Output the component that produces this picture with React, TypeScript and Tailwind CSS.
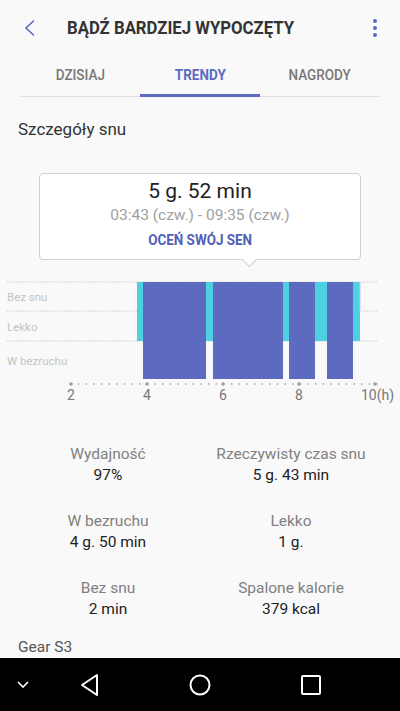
import React from 'react';

const font = { fontFamily: 'Roboto, "Noto Sans", sans-serif' };

const stats = [
  { label: 'Wydajność', value: '97%' },
  { label: 'Rzeczywisty czas snu', value: '5 g. 43 min' },
  { label: 'W bezruchu', value: '4 g. 50 min' },
  { label: 'Lekko', value: '1 g.' },
  { label: 'Bez snu', value: '2 min' },
  { label: 'Spalone kalorie', value: '379 kcal' },
];

// x of hour h on the axis: 2h -> 71, 38px per hour
const hx = (h: number) => 71 + (h - 2) * 38;

function SleepChart() {
  const deep = [
    [143, 206],
    [213, 283],
    [289, 315],
    [327, 353],
  ];
  const axisDots: number[] = [];
  for (let x = 71; x <= 377; x += 7.65) axisDots.push(x);
  return (
    <svg width="400" height="135" viewBox="0 270 400 135" className="block">
      {[281, 310, 340].map(y => (
        <line key={y} x1="7" x2="377" y1={y} y2={y} stroke="#c8c8c8" strokeWidth="1" strokeDasharray="1.5 1.5" />
      ))}
      <text x="7" y="300" fontSize="11.5" fill="#c4c4c4" fontFamily="Roboto">Bez snu</text>
      <text x="7" y="330" fontSize="11.5" fill="#c4c4c4" fontFamily="Roboto">Lekko</text>
      <text x="7" y="364" fontSize="11.5" fill="#c4c4c4" fontFamily="Roboto">W bezruchu</text>
      <rect x="137" y="281" width="223" height="59" fill="#4dd0e1" />
      <rect x="359.5" y="281" width="1" height="29" fill="#c5cae9" />
      {deep.map(([a, b]) => (
        <rect key={a} x={a} y="281" width={b - a} height="97" fill="#5c6bc0" />
      ))}
      {axisDots.map((x, i) => (
        <circle key={i} cx={x} cy="383" r="0.9" fill="#b0b0b0" />
      ))}
      {[2, 4, 6, 8, 10].map(h => (
        <circle key={h} cx={hx(h)} cy="383" r="1.8" fill="#9e9e9e" />
      ))}
      {[2, 4, 6, 8].map(h => (
        <text key={h} x={hx(h)} y="399" fontSize="14" fill="#777" textAnchor="middle" fontFamily="Roboto">{h}</text>
      ))}
      <text x="361" y="399" fontSize="14" fill="#777" fontFamily="Roboto">10(h)</text>
    </svg>
  );
}

export default function App() {
  return (
    <div className="w-[400px] h-[711px] bg-[#f9f9f9] flex flex-col overflow-hidden" style={font}>
      {/* Header */}
      <div className="h-[54px] flex items-center relative shrink-0">
        <svg width="14" height="18" viewBox="0 0 14 18" className="absolute left-[23px] top-[19px]">
          <polyline points="11,1.5 3,9 11,16.5" fill="none" stroke="#5c6bc0" strokeWidth="1.6" />
        </svg>
        <span className="ml-[67px] text-[18px] font-bold text-[#333] origin-left scale-x-[0.93] whitespace-nowrap">
          BĄDŹ BARDZIEJ WYPOCZĘTY
        </span>
        <div className="absolute right-[23px] top-[19px] flex flex-col gap-[3px]">
          <span className="w-[4px] h-[4px] rounded-full bg-[#5c6bc0]" />
          <span className="w-[4px] h-[4px] rounded-full bg-[#5c6bc0]" />
          <span className="w-[4px] h-[4px] rounded-full bg-[#5c6bc0]" />
        </div>
      </div>

      {/* Tabs */}
      <div className="mx-5 h-[43px] grid grid-cols-3 border-b border-[#e0e0e0] shrink-0">
        {['DZISIAJ', 'TRENDY', 'NAGRODY'].map(t => {
          const active = t === 'TRENDY';
          return (
            <div key={t} className="relative flex items-center justify-center">
              <span className={`text-[15px] scale-x-[0.9] ${active ? 'font-bold text-[#5c6bc0]' : 'font-medium text-[#777]'}`}>
                {t}
              </span>
              {active && <span className="absolute left-0 right-0 bottom-[-1px] h-[3px] bg-[#5c6bc0]" />}
            </div>
          );
        })}
      </div>

      <div className="px-[18px] pt-[20px] text-[17px] text-[#333] leading-[24px] shrink-0">Szczegóły snu</div>

      {/* Tooltip */}
      <div className="mt-[32px] mx-[39px] h-[87px] relative bg-white border border-[#d0d0d0] rounded-[4px] flex flex-col items-center shrink-0">
        <div className="mt-[3px] text-[21px] text-[#222] leading-[28px]">5 g. 52 min</div>
        <div className="text-[15.5px] text-[#a0a0a0] leading-[20px]">03:43 (czw.) - 09:35 (czw.)</div>
        <div className="mt-[5px] text-[14px] font-bold text-[#5160b6] leading-[20px] scale-x-[0.96]">OCEŃ SWÓJ SEN</div>
        <span className="absolute left-[204px] bottom-[-6px] w-[11px] h-[11px] bg-white border-r border-b border-[#d0d0d0] rotate-45" />
      </div>

      <div className="mt-[11px] shrink-0">
        <SleepChart />
      </div>

      {/* Stats */}
      <div className="mt-[38px] grid grid-cols-[216px_150px] gap-y-[25px] shrink-0">
        {stats.map(s => (
          <div key={s.label} className="flex flex-col items-center">
            <span className="text-[15.5px] text-[#808080] leading-[21px] whitespace-nowrap">{s.label}</span>
            <span className="text-[15.5px] text-[#222] leading-[21px] whitespace-nowrap">{s.value}</span>
          </div>
        ))}
      </div>

      <div className="px-[18px] mt-[17px] text-[15.5px] text-[#555] leading-[21px]">Gear S3</div>

      <div className="flex-1" />

      {/* Nav bar */}
      <div className="h-[53px] bg-black flex items-center relative shrink-0">
        <svg width="14" height="10" viewBox="0 0 14 10" className="absolute left-[16px] top-[22px]">
          <polyline points="2,2 7,7 12,2" fill="none" stroke="white" strokeWidth="1.6" />
        </svg>
        <svg width="22" height="24" viewBox="0 0 22 24" className="absolute left-[79px] top-[15px]">
          <polygon points="18,2 18,22 3,12" fill="none" stroke="white" strokeWidth="2" strokeLinejoin="round" />
        </svg>
        <svg width="24" height="24" viewBox="0 0 24 24" className="absolute left-[188px] top-[15px]">
          <circle cx="12" cy="12" r="9.5" fill="none" stroke="white" strokeWidth="2" />
        </svg>
        <svg width="22" height="22" viewBox="0 0 22 22" className="absolute left-[300px] top-[16px]">
          <rect x="2" y="2" width="18" height="18" rx="1" fill="none" stroke="white" strokeWidth="2" />
        </svg>
      </div>
    </div>
  );
}
